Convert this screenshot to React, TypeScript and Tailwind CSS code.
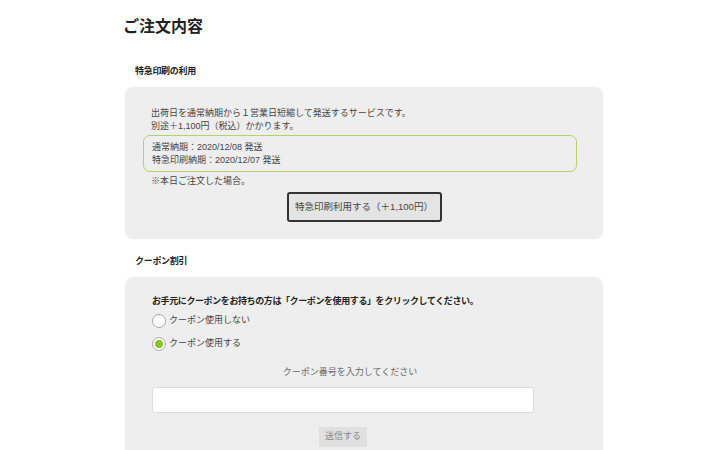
import { useState } from "react";

const font = { fontFamily: '"Liberation Sans", "Noto Sans CJK JP", sans-serif' };

const Radio = ({ checked, label, onClick }: { checked: boolean; label: string; onClick: () => void }) => (
    <button type="button" onClick={onClick} className="flex items-center gap-[3px] h-[15px] text-[9px] text-[#444]">
        <span className="w-[14px] h-[14px] rounded-full bg-white border border-[#a9a9a9] flex items-center justify-center">
            {checked && <span className="w-[8px] h-[8px] rounded-full bg-[#8cc21f]" />}
        </span>
        <span className="leading-[13px]">{label}</span>
    </button>
);

export default function App() {
    const [useCoupon, setUseCoupon] = useState(true);

    return (
        <div className="min-h-screen bg-white text-[#333]" style={font}>
            <div className="mx-auto w-[478px] pt-[15px]">
                {/* Title */}
                <h1 className="-ml-[2px] text-[16px] font-bold leading-[24px] text-[#222]">ご注文内容</h1>

                {/* Express printing */}
                <h2 className="mt-[26px] pl-[10px] text-[9px] font-bold leading-[13px] tracking-[-0.3px] text-[#222]">特急印刷の利用</h2>
                <section className="mt-[9px] rounded-[8px] bg-[#eeeeee] pt-[20px] pb-[17px] pl-[18px] pr-[26px]">
                    <p className="pl-[8px] text-[9px] leading-[13px] text-[#444]">
                        出荷日を通常納期から１営業日短縮して発送するサービスです。
                        <br />
                        別途＋1,100円（税込）かかります。
                    </p>
                    <div className="mt-[2px] rounded-[7px] border-[1.5px] border-[#b3d36a] pl-[8px] pt-[5px] pb-[4px] text-[9px] leading-[13px] text-[#444]">
                        <p>通常納期：2020/12/08 発送</p>
                        <p>特急印刷納期：2020/12/07 発送</p>
                    </div>
                    <p className="mt-[3px] pl-[8px] text-[9px] leading-[13px] text-[#444]">※本日ご注文した場合。</p>
                    <div className="mt-[4px] pl-[8px] flex justify-center">
                        <button
                            type="button"
                            className="h-[30px] w-[155px] rounded-[3px] border-2 border-[#333] bg-[#e4e4e4] text-[9.5px] text-[#444]"
                        >
                            特急印刷利用する（＋1,100円）
                        </button>
                    </div>
                </section>

                {/* Coupon */}
                <h2 className="mt-[16px] pl-[10px] text-[9px] font-bold leading-[13px] tracking-[-0.3px] text-[#222]">クーポン割引</h2>
                <section className="mt-[9px] rounded-t-[8px] bg-[#eeeeee] pt-[18px] pb-[10px] pl-[27px] pr-[69px]">
                    <p className="text-[9px] font-bold leading-[13px] tracking-[-0.4px] text-[#222]">
                        お手元にクーポンをお持ちの方は「クーポンを使用する」をクリックしてください。
                    </p>
                    <div className="mt-[5px] flex flex-col gap-[8px]">
                        <Radio checked={!useCoupon} label="クーポン使用しない" onClick={() => setUseCoupon(false)} />
                        <Radio checked={useCoupon} label="クーポン使用する" onClick={() => setUseCoupon(true)} />
                    </div>
                    <p className="mt-[15px] pl-[14px] text-center text-[9px] leading-[13px] text-[#666]">
                        クーポン番号を入力してください
                    </p>
                    <input
                        type="text"
                        className="mt-[8px] block h-[26px] w-full rounded-[3px] border border-[#dcdcdc] bg-white px-2 text-[10px] outline-none"
                    />
                    <div className="mt-[14px] flex justify-center">
                        <button type="button" className="h-[20px] w-[48px] bg-[#e0e0e0] text-[9px] text-[#888]">
                            送信する
                        </button>
                    </div>
                </section>
            </div>
        </div>
    );
}
